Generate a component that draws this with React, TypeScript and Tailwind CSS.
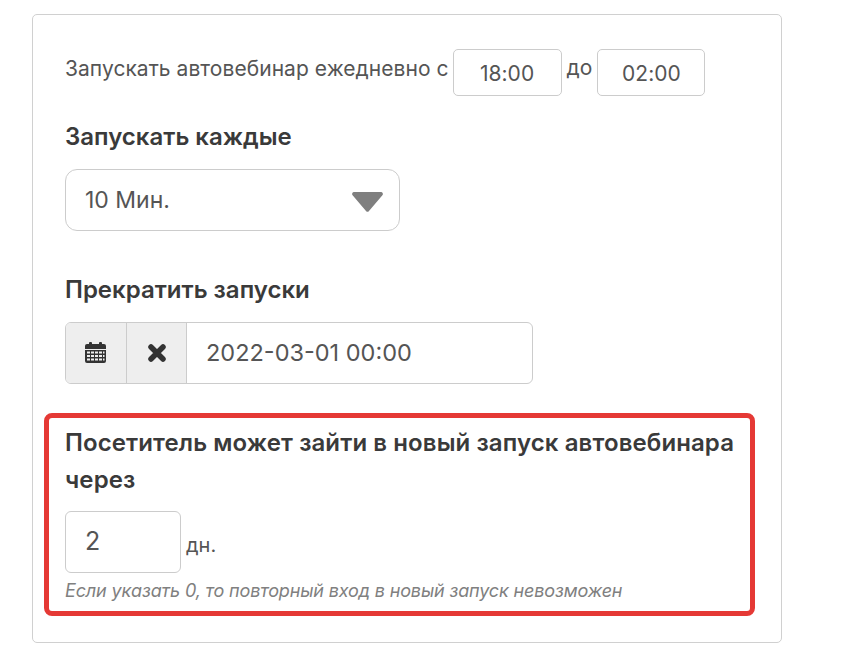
import React from "react";

function Calendar() {
  return (
    <svg width="21" height="22" viewBox="0 0 21 22" fill="#333">
      <rect x="4" y="0" width="3" height="4" rx="1" />
      <rect x="14" y="0" width="3" height="4" rx="1" />
      <path d="M2 2h17a2 2 0 0 1 2 2v3H0V4a2 2 0 0 1 2-2z" />
      <path fillRule="evenodd" d="M0 8h21v11a2 2 0 0 1-2 2H2a2 2 0 0 1-2-2V8zm2 1.5v2h3v-2H2zm4 0v2h3v-2H6zm4 0v2h3v-2h-3zm4 0v2h3v-2h-3zm4 0v2h1.5v-2H18zM2 13v2h3v-2H2zm4 0v2h3v-2H6zm4 0v2h3v-2h-3zm4 0v2h3v-2h-3zm4 0v2h1.5v-2H18zM2 16.5v2h3v-2H2zm4 0v2h3v-2H6zm4 0v2h3v-2h-3zm4 0v2h3v-2h-3zm4 0v2h1.5v-2H18z" />
    </svg>
  );
}

function Cross() {
  return (
    <svg width="20" height="20" viewBox="0 0 20 20" fill="none" stroke="#333" strokeWidth="5.5" strokeLinecap="round">
      <path d="M4 4l12 12M16 4L4 16" />
    </svg>
  );
}

export default function App() {
  return (
    <div className="min-h-[657px] bg-white pl-[32px] pt-[14px] font-['Inter','Noto_Sans',sans-serif] text-[#555]">
      <div className="h-[629px] w-[750px] rounded-[5px] border border-[#d0d0d0] bg-white pl-[32px] pt-[34px]">
        <div className="flex h-[47px] items-center text-[21px] tracking-[0.05px]">
          <span className="-translate-y-[4px]">Запускать автовебинар ежедневно с</span>
          <div className="ml-[4px] flex h-[47px] w-[109px] items-center justify-center rounded-[5px] border border-[#ccc] pt-[2px]">18:00</div>
          <span className="mx-[5px] -translate-y-[5px]">до</span>
          <div className="flex h-[47px] w-[108px] items-center justify-center rounded-[5px] border border-[#ccc] pt-[2px]">02:00</div>
        </div>

        <div className="mt-[25px] text-[24px] font-semibold leading-[32px] text-[#3a3a3a]">Запускать каждые</div>
        <div className="mt-[16px] flex h-[62px] w-[335px] items-center justify-between rounded-[12px] border border-[#ccc] pl-[19px] pr-[16px] text-[23px]">
          <span>10 Мин.</span>
          <svg className="mt-[3px]" width="31" height="20" viewBox="0 0 31 20" fill="#7f7f7f">
            <path d="M2 0h27a2 2 0 0 1 1.4 3.3L17 19a2 2 0 0 1-3 0L.6 3.3A2 2 0 0 1 2 0z" />
          </svg>
        </div>

        <div className="mt-[43px] text-[24px] font-semibold leading-[32px] text-[#3a3a3a]">Прекратить запуски</div>
        <div className="mt-[16px] flex h-[62px] w-[468px] overflow-hidden rounded-[6px] border border-[#ccc]">
          <div className="flex w-[61px] items-center justify-center border-r border-[#ccc] bg-[#eee] pr-[2px]"><Calendar /></div>
          <div className="flex w-[60px] items-center justify-center border-r border-[#ccc] bg-[#eee]"><Cross /></div>
          <div className="flex items-center pl-[19px] text-[23.5px]">2022-03-01 00:00</div>
        </div>

        <div className="-ml-[21px] mt-[29px] h-[203px] w-[711px] rounded-[8px] border-[5px] border-[#e53935] pl-[16px] pt-[6px]">
          <div className="w-[680px] text-[24px] font-semibold leading-[37px] tracking-[0.1px] text-[#3a3a3a]">Посетитель может зайти в новый запуск автовебинара через</div>
          <div className="mt-[13px] flex items-start">
            <div className="flex h-[62px] w-[116px] items-center rounded-[6px] border border-[#ccc] pl-[19px] text-[25px]">2</div>
            <span className="ml-[5px] mt-[20px] text-[20px] leading-[28px]">дн.</span>
          </div>
          <div className="mt-[6px] text-[18px] italic leading-[24px] tracking-[-0.15px] text-[#808080]">Если указать 0, то повторный вход в новый запуск невозможен</div>
        </div>
      </div>
    </div>
  );
}
